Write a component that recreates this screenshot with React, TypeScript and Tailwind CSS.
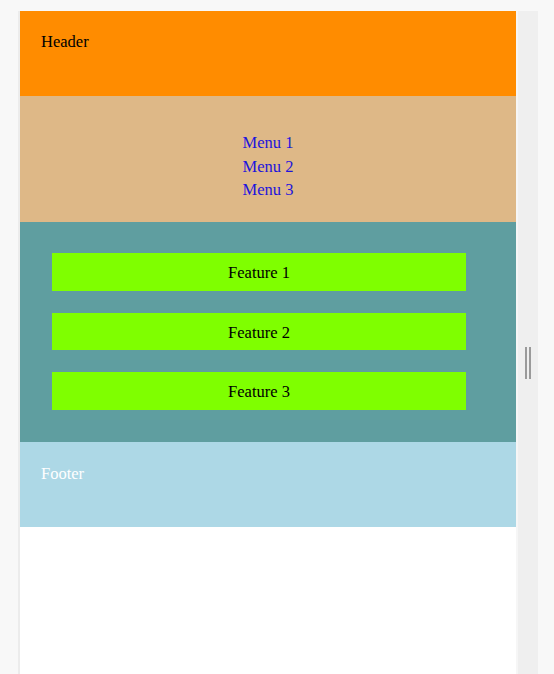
import React from "react";

export default function App() {
  const serif = { fontFamily: '"Liberation Serif", "Times New Roman", serif' };
  return (
    <div className="w-[554px] h-[674px] bg-[#f8f8f8] flex overflow-hidden" style={serif}>
      <div className="w-[18px] shrink-0" />
      <div className="w-[2px] shrink-0 mt-[11px] bg-[#ececec]" />
      <div className="w-[496px] shrink-0 mt-[11px] bg-white flex flex-col text-[16.5px]">
        <div className="h-[85px] bg-[#ff8c00] pl-[21px] pt-[22px] text-black leading-[18px]">Header</div>
        <div className="h-[126px] bg-[#deb887] flex flex-col items-center pt-[35px] text-[#1d14dc]">
          <div className="h-[23.5px] leading-[23.5px]">Menu 1</div>
          <div className="h-[23.5px] leading-[23.5px]">Menu 2</div>
          <div className="h-[23.5px] leading-[23.5px]">Menu 3</div>
        </div>
        <div className="h-[220px] bg-[#5f9ea0] pl-[32px] pr-[50px] pt-[31px] flex flex-col gap-[22px]">
          <div className="h-[37.5px] bg-[#7fff00] flex items-center justify-center pt-[4px] text-black">Feature 1</div>
          <div className="h-[37.5px] bg-[#7fff00] flex items-center justify-center pt-[4px] text-black">Feature 2</div>
          <div className="h-[37.5px] bg-[#7fff00] flex items-center justify-center pt-[4px] text-black">Feature 3</div>
        </div>
        <div className="h-[85px] bg-[#add8e6] pl-[21px] pt-[23px] text-white leading-[18px]">Footer</div>
        <div className="flex-1 bg-white" />
      </div>
      <div className="w-[2px] shrink-0 mt-[11px] bg-[#f6f6f6]" />
      <div className="w-[20px] shrink-0 mt-[11px] bg-[#efefef] flex justify-center pt-[336px]">
        <div className="flex gap-[2px] h-[32px]">
          <div className="w-[2px] h-full bg-[#9a9a9a]" />
          <div className="w-[2px] h-full bg-[#9a9a9a]" />
        </div>
      </div>
      <div className="flex-1" />
    </div>
  );
}
